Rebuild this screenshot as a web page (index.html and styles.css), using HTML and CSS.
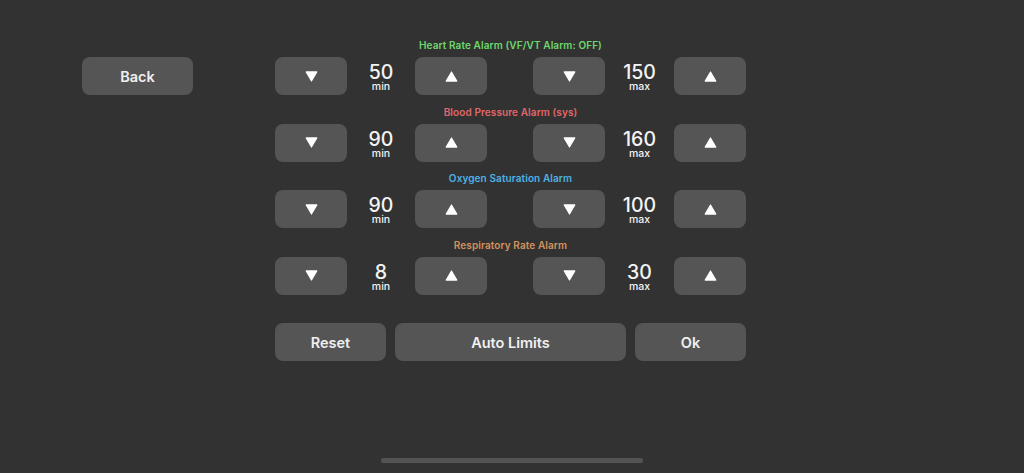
FILE: index.html
```html
<!DOCTYPE html>
<html lang="en">
<head>
<meta charset="utf-8">
<title>Alarm Limits</title>
<link rel="stylesheet" href="styles.css">
</head>
<body>
<div class="screen">
  <div class="side">
    <button class="btn back">Back</button>
  </div>
  <div class="panel">
    <section class="alarm">
      <div class="title hr">Heart Rate Alarm (VF/VT Alarm: OFF)</div>
      <div class="row">
        <button class="btn arrow"><svg viewBox="0 0 14 12"><path d="M1.2 1h11.6L7 11z"/></svg></button>
        <div class="val"><div class="num">50</div><div class="unit">min</div></div>
        <button class="btn arrow"><svg viewBox="0 0 14 12"><path d="M1.2 11h11.6L7 1z"/></svg></button>
        <div class="spacer"></div>
        <button class="btn arrow"><svg viewBox="0 0 14 12"><path d="M1.2 1h11.6L7 11z"/></svg></button>
        <div class="val"><div class="num">150</div><div class="unit">max</div></div>
        <button class="btn arrow"><svg viewBox="0 0 14 12"><path d="M1.2 11h11.6L7 1z"/></svg></button>
      </div>
    </section>
    <section class="alarm">
      <div class="title bp">Blood Pressure Alarm (sys)</div>
      <div class="row">
        <button class="btn arrow"><svg viewBox="0 0 14 12"><path d="M1.2 1h11.6L7 11z"/></svg></button>
        <div class="val"><div class="num">90</div><div class="unit">min</div></div>
        <button class="btn arrow"><svg viewBox="0 0 14 12"><path d="M1.2 11h11.6L7 1z"/></svg></button>
        <div class="spacer"></div>
        <button class="btn arrow"><svg viewBox="0 0 14 12"><path d="M1.2 1h11.6L7 11z"/></svg></button>
        <div class="val"><div class="num">160</div><div class="unit">max</div></div>
        <button class="btn arrow"><svg viewBox="0 0 14 12"><path d="M1.2 11h11.6L7 1z"/></svg></button>
      </div>
    </section>
    <section class="alarm">
      <div class="title o2">Oxygen Saturation Alarm</div>
      <div class="row">
        <button class="btn arrow"><svg viewBox="0 0 14 12"><path d="M1.2 1h11.6L7 11z"/></svg></button>
        <div class="val"><div class="num">90</div><div class="unit">min</div></div>
        <button class="btn arrow"><svg viewBox="0 0 14 12"><path d="M1.2 11h11.6L7 1z"/></svg></button>
        <div class="spacer"></div>
        <button class="btn arrow"><svg viewBox="0 0 14 12"><path d="M1.2 1h11.6L7 11z"/></svg></button>
        <div class="val"><div class="num">100</div><div class="unit">max</div></div>
        <button class="btn arrow"><svg viewBox="0 0 14 12"><path d="M1.2 11h11.6L7 1z"/></svg></button>
      </div>
    </section>
    <section class="alarm">
      <div class="title rr">Respiratory Rate Alarm</div>
      <div class="row">
        <button class="btn arrow"><svg viewBox="0 0 14 12"><path d="M1.2 1h11.6L7 11z"/></svg></button>
        <div class="val"><div class="num">8</div><div class="unit">min</div></div>
        <button class="btn arrow"><svg viewBox="0 0 14 12"><path d="M1.2 11h11.6L7 1z"/></svg></button>
        <div class="spacer"></div>
        <button class="btn arrow"><svg viewBox="0 0 14 12"><path d="M1.2 1h11.6L7 11z"/></svg></button>
        <div class="val"><div class="num">30</div><div class="unit">max</div></div>
        <button class="btn arrow"><svg viewBox="0 0 14 12"><path d="M1.2 11h11.6L7 1z"/></svg></button>
      </div>
    </section>
    <div class="actions">
      <button class="btn action">Reset</button>
      <button class="btn action">Auto Limits</button>
      <button class="btn action">Ok</button>
    </div>
  </div>
</div>
<div class="home-indicator"></div>
</body>
</html>
```

FILE: styles.css
```css
html, body {
  margin: 0;
  padding: 0;
  background: #323232;
  width: 1024px;
  height: 473px;
  overflow: hidden;
  font-family: "Inter", "Noto Sans", sans-serif;
  color: #f2f2f2;
}

.screen {
  display: flex;
  align-items: flex-start;
  gap: 82px;
}

.side {
  padding-left: 82px;
  padding-top: 57px;
}

.btn {
  border: none;
  margin: 0;
  padding: 0;
  background: #555555;
  border-radius: 8px;
  color: #f0f0f0;
  font-family: inherit;
  display: flex;
  align-items: center;
  justify-content: center;
  height: 38px;
}

.back {
  width: 111px;
  font-size: 14.5px;
  font-weight: 600;
}

.panel {
  padding-top: 38px;
  width: 471px;
  display: flex;
  flex-direction: column;
}

.alarm {
  display: flex;
  flex-direction: column;
  margin-bottom: 9.5px;
}

.title {
  font-size: 10px;
  font-weight: 600;
  line-height: 14px;
  text-align: center;
  margin-bottom: 5px;
  letter-spacing: 0.1px;
}

.hr { color: #6cd96c; }
.bp { color: #e0676a; }
.o2 { color: #4cb3e6; }
.rr { color: #d4935d; }

.row {
  display: grid;
  grid-template-columns: 72px 68px 72px 46px 72px 69px 72px;
  height: 38px;
}

.arrow svg {
  width: 13px;
  height: 11px;
  fill: #ffffff;
  stroke: #ffffff;
  stroke-width: 1.2;
  stroke-linejoin: round;
}

.val {
  display: flex;
  flex-direction: column;
  align-items: center;
  justify-content: center;
  color: #f4f4f4;
}

.num {
  font-size: 19.5px;
  font-weight: 500;
  line-height: 18px;
  height: 18px;
  margin-top: 3px;
}

.unit {
  font-size: 10.5px;
  font-weight: 500;
  line-height: 10px;
  height: 10px;
  margin-top: 1px;
}

.actions {
  margin-top: 19px;
  display: flex;
  gap: 9px;
}

.action {
  flex: 0 0 111px;
  font-size: 14.5px;
  font-weight: 600;
}

.action:nth-child(2) {
  flex: 1 1 auto;
}

.home-indicator {
  position: fixed;
  left: 381px;
  top: 458px;
  width: 262px;
  height: 5px;
  border-radius: 3px;
  background: #545454;
}
```
